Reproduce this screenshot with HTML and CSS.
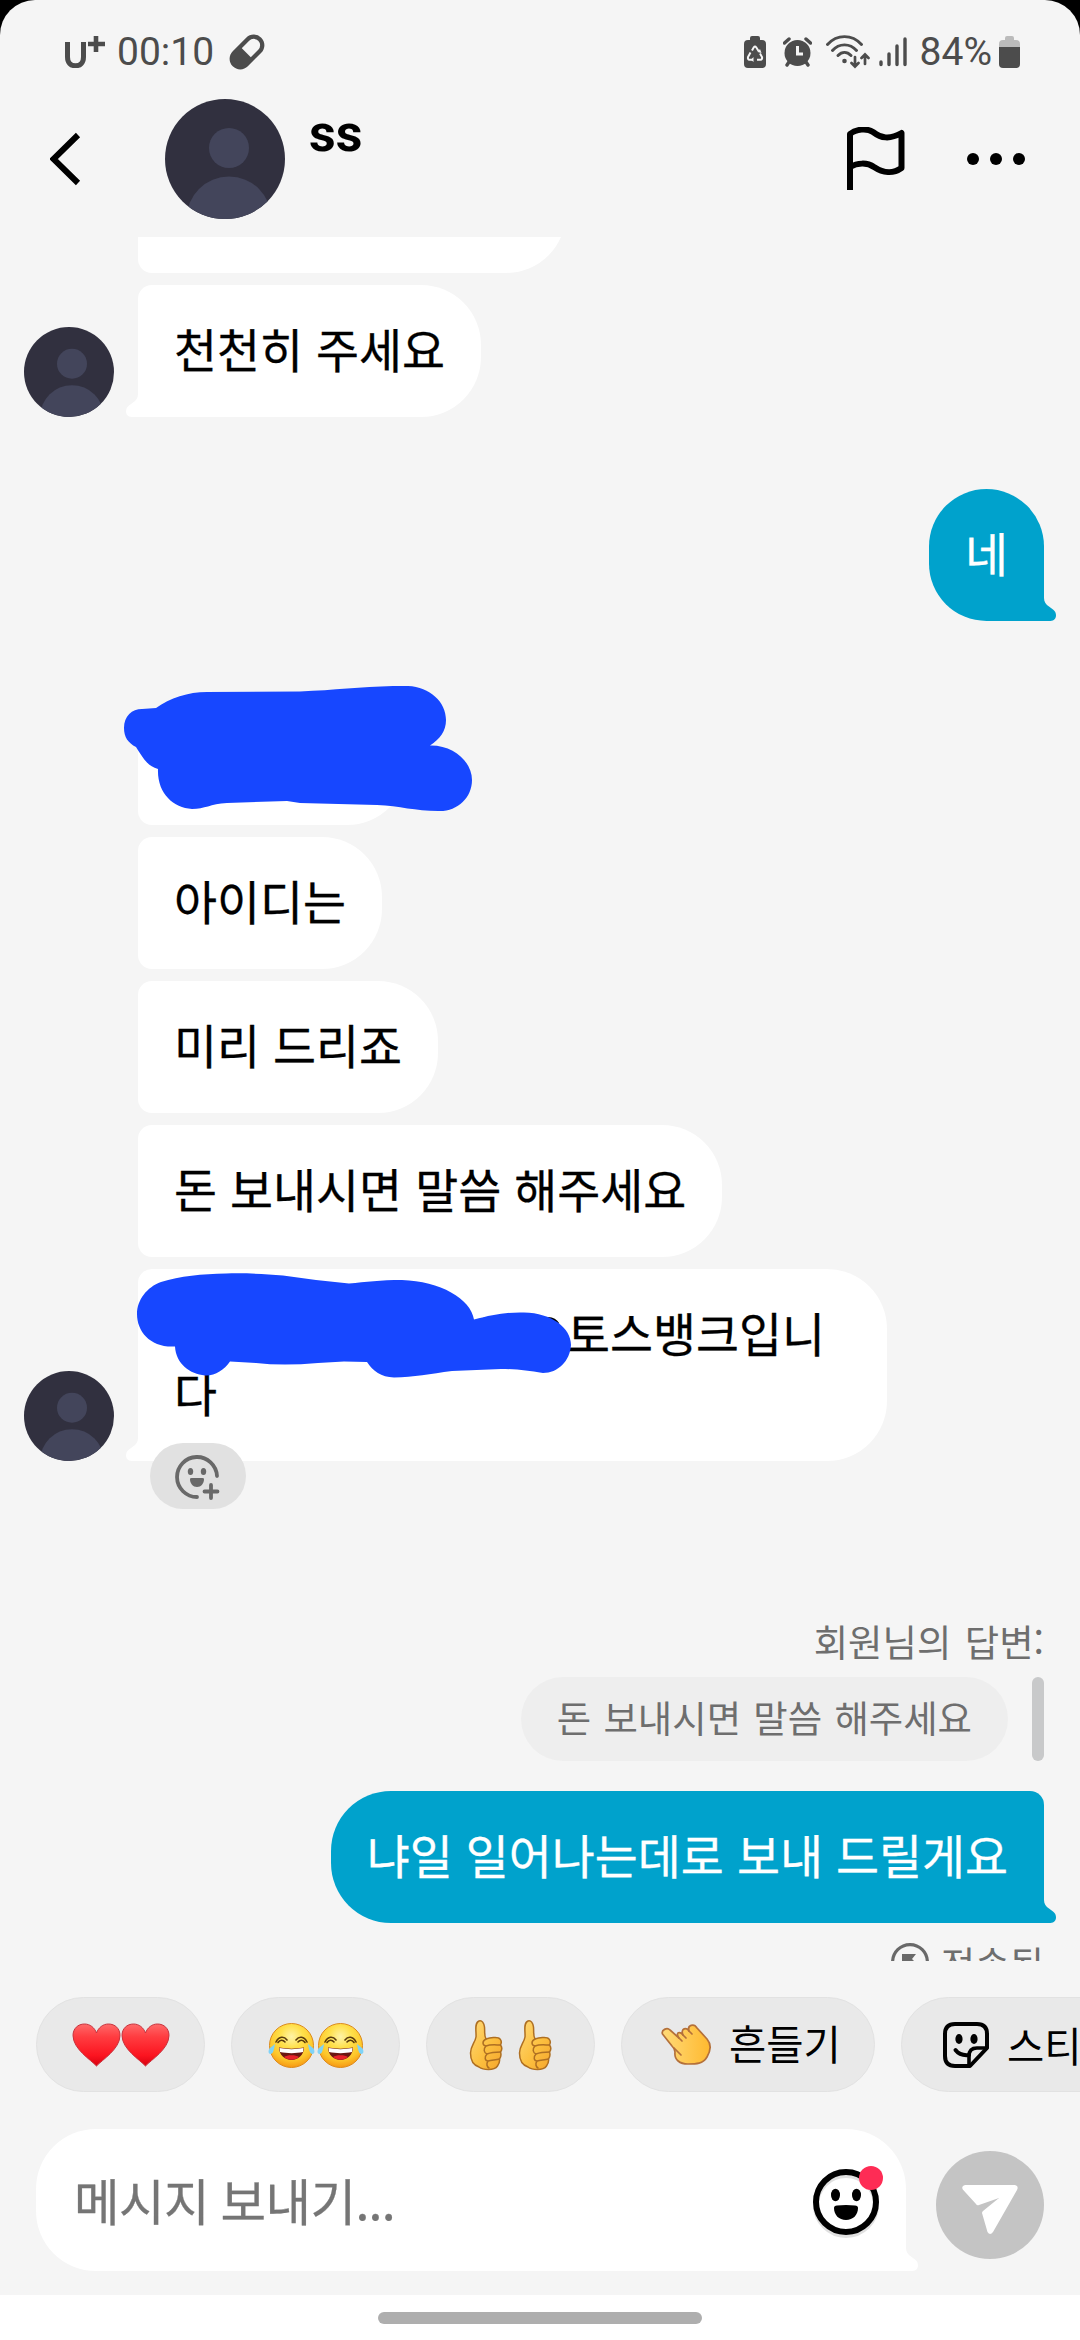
FILE: index.html
```html
<!DOCTYPE html>
<html lang="ko">
<head>
<meta charset="utf-8">
<title>ss</title>
<link rel="stylesheet" href="styles.css">
</head>
<body>
<svg class="defs" width="0" height="0" aria-hidden="true">
  <defs>
    <linearGradient id="heartFill" x1="0" y1="0" x2="0" y2="1"><stop offset="0" stop-color="#ff6a6a"/><stop offset=".3" stop-color="#ff3d41"/><stop offset=".75" stop-color="#fb1420"/><stop offset="1" stop-color="#d8000f"/></linearGradient>
    <radialGradient id="faceFill" cx=".5" cy=".3" r=".75"><stop offset="0" stop-color="#fff3a8"/><stop offset=".35" stop-color="#ffe04a"/><stop offset=".7" stop-color="#fdc62a"/><stop offset="1" stop-color="#f48a0c"/></radialGradient>
    <linearGradient id="skinFill" x1="0" y1="0" x2="1" y2="1"><stop offset="0" stop-color="#ffd97a"/><stop offset=".55" stop-color="#fcc040"/><stop offset="1" stop-color="#f5a52c"/></linearGradient>
    <linearGradient id="handFill" x1="0" y1="0" x2="1" y2="0"><stop offset="0" stop-color="#ffda78"/><stop offset="1" stop-color="#ffb92f"/></linearGradient>
    <clipPath id="round"><circle cx="60" cy="60" r="60"/></clipPath>
    <symbol id="avatar" viewBox="0 0 120 120">
      <g clip-path="url(#round)"><rect width="120" height="120" fill="#31303f"/><circle cx="64" cy="49" r="20" fill="#43455b"/><circle cx="64" cy="120" r="42.5" fill="#43455b"/></g>
    </symbol>
    <symbol id="tail" viewBox="-2 0 14 30">
      <path d="M-2 0H0V7C0 11 2 13.500 5 15.500L9 18.500C11 20 12 22 12 24.300C12 27.500 10 30 6.500 30H-2Z" fill="currentColor"/>
    </symbol>
    <symbol id="heart" viewBox="0 0 49 44">
      <path d="M24.500 43C19 37 1 26 1 12.500C1 5.500 6 1 12.500 1C18 1 22.500 4.500 24.500 10C26.500 4.500 31 1 36.500 1C43 1 48 5.500 48 12.500C48 26 30 37 24.500 43Z" fill="url(#heartFill)" stroke="#c8323c" stroke-width="1"/>
    </symbol>
    <symbol id="joy" viewBox="0 0 49 48">
      <circle cx="24.500" cy="24.500" r="22" fill="url(#faceFill)" stroke="#dc8a1c" stroke-width="1"/>
      <path d="M9 21C12 15 17 15 20 19M29 19C32 15 37 15 40 21M11 21.500C13 18.500 16 18.500 18 21M31 21C33 18.500 36 18.500 38 21.500" fill="none" stroke="#5a3a0c" stroke-width="1.600" stroke-linecap="round"/>
      <path d="M12 26.500C20 28 29 28 37 26.500C37 34 31 39 24.500 39C18 39 12 34 12 26.500Z" fill="#6c1712"/>
      <path d="M12.500 27C20 28.500 29 28.500 36.500 27L36 31C29 32.500 20 32.500 13 31Z" fill="#fff"/>
      <path d="M17 36C20 33.500 29 33.500 32 36C28 39.500 21 39.500 17 36Z" fill="#e8232a"/>
      <path d="M8 23C7 29 6 33 3.500 33C1 33 1 29 3 27ZM41 23C42 29 43 33 45.500 33C48 33 48 29 46 27Z" fill="#7fd3f7"/>
    </symbol>
    <symbol id="thumb" viewBox="0 0 34 52">
      <path d="M10 2C13 1 15 4 15.500 8C16 14 15 17 17 20C20 19 29 17 31 20C33 22 32 25 31.500 26C33 28 33 31 31.500 33C32.500 36 32 38 30.500 40C31 43 30 45 28.500 47C25 52 14 51 10 48C4 46 1.500 42 1.500 34C1.500 27 6 24 7 18C7.500 13 5 4 10 2Z" fill="url(#skinFill)" stroke="#ae6f22" stroke-width="1.500"/>
      <path d="M17 20C13 22 13 26 17 27C14 30 15 34 18 35C15 38 16 42 19 42C17 45 18 48 20 49M17 27C22 25 27 26 31.500 26M18 35C23 33 28 33 31.500 33M19 42C23 41 27 41 30.500 40" fill="none" stroke="#ae6f22" stroke-width="1.500" stroke-linecap="round"/>
    </symbol>
  </defs>
</svg>

<div class="phone">
  <div class="status">
    <div class="status-left">
      <svg width="40" height="32" viewBox="0 0 40 32" fill="none" stroke="#4c4c4c"><path d="M2.500 6V21C2.500 27 6 29.800 10.500 29.800S18.500 27 18.500 21V6" stroke-width="5"/><path d="M31 0V16M23 8H40" stroke-width="4.600"/></svg>
      <span class="clock">00:10</span>
      <svg class="pill-icon" width="36" height="36" viewBox="0 0 36 36"><g transform="rotate(45 18 18)"><rect x="9" y="-1" width="18" height="38" rx="9" fill="none" stroke="#4c4c4c" stroke-width="4.500"/><path d="M8 19H28V28A10 10 0 0 1 8 28Z" fill="#4c4c4c"/></g></svg>
    </div>
    <div class="status-right">
      <svg width="22" height="32" viewBox="0 0 22 32"><path d="M6 2Q6 0 8 0H14Q16 0 16 2V4H18Q22 4 22 8V28Q22 32 18 32H4Q0 32 0 28V8Q0 4 4 4H6Z" fill="#4c4c4c"/><path d="M8 14.500L9.800 11.300Q11 9.800 12.200 11.300L14.500 15M16 17.500L18 21Q18.500 23.500 16.500 23.700H13M9 23.700H5.500Q3.500 23.500 4 21L6.500 16.500" fill="none" stroke="#f5f5f5" stroke-width="2"/><path d="M9.500 21V26L7 23.700ZM13.500 16L17.500 17L16 13Z" fill="#f5f5f5"/></svg>
      <svg class="alarm" width="29" height="30" viewBox="0 0 29 30"><circle cx="14.500" cy="16" r="13" fill="#4c4c4c"/><path d="M1.500 6L6 2M27.500 6L23 2" stroke="#4c4c4c" stroke-width="3.400" stroke-linecap="round"/><path d="M4 28L6 25M25 28L23 25" stroke="#4c4c4c" stroke-width="3.400" stroke-linecap="round"/><path d="M14.500 9V17H20" fill="none" stroke="#f5f5f5" stroke-width="3"/></svg>
      <svg class="wifi" width="44" height="34" viewBox="0 0 44 34" fill="none" stroke="#4c4c4c" stroke-width="2.900" stroke-linecap="round"><path d="M1.500 9.500C11-1 26-1 35.500 9.500M6.500 15.500C13 8 24 8 30.500 15.500M12 20.500C16 16.500 21 16.500 25 20.500"/><circle cx="18.500" cy="26" r="2.300" fill="#4c4c4c" stroke="none"/><path d="M29 22V31M25.500 28L29 31.500L32.500 28M39 29V20M35.500 23L39 19.500L42.500 23" stroke-width="2.700"/></svg>
      <svg class="signal" width="28" height="30" viewBox="0 0 28 30" stroke="#4c4c4c" stroke-width="3.400" stroke-linecap="round"><path d="M2 25V27.500M10 17V27.500M18 9V27.500M26 2V27.500"/></svg>
      <span class="percent">84%</span>
      <svg width="21" height="32" viewBox="0 0 21 32"><path d="M6 2Q6 0 8 0H13Q15 0 15 2V4H17Q21 4 21 8V12H0V8Q0 4 4 4H6Z" fill="#bbb"/><path d="M0 11H21V28Q21 32 17 32H4Q0 32 0 28Z" fill="#4c4c4c"/></svg>
    </div>
  </div>

  <header class="header">
    <svg class="back" width="31" height="54" viewBox="0 0 31 54"><path d="M28 3L3.500 27L28 51" fill="none" stroke="#000" stroke-width="6"/></svg>
    <svg class="header-avatar" width="120" height="120"><use href="#avatar"/></svg>
    <span class="name">ss</span>
    <svg class="flag" width="58" height="64" viewBox="0 0 58 64"><path d="M3 63V7C9 2 20 1 26 5C34 11 42 13 54.500 6V41C46 47 36 46 27 40C20 35 10 36 3 40" fill="none" stroke="#000" stroke-width="6" stroke-linejoin="round"/></svg>
    <svg width="58" height="12" viewBox="0 0 58 12"><circle cx="6" cy="6" r="6"/><circle cx="29" cy="6" r="6"/><circle cx="52" cy="6" r="6"/></svg>
  </header>

  <main class="chat">
    <div class="row in scrolled"><div class="bubble cut"></div></div>
    <div class="row in">
      <svg class="avatar" width="90" height="90"><use href="#avatar"/></svg>
      <div class="bubble tailed">천천히 주세요<svg class="tail" width="14" height="30"><use href="#tail"/></svg></div>
    </div>
    <div class="row out short">
      <div class="bubble tailed">네<svg class="tail" width="14" height="30"><use href="#tail"/></svg></div>
    </div>
    <div class="row in group"><div class="bubble first"></div>
      <svg class="scribble one" width="352" height="130" viewBox="122 684 352 130"><path d="M124 728C124 716 132 709 142 709L156 708C170 698 188 692 207 692L300 691.500C335 690 360 687 393 686H408C430 687 446 702 446 720C446 731 440 739 430 745.500C454 745 472 762 472 780C472 798 457 812 438 811C415 811 400 806 377 805L300 803L287 801L227 803C210 804 205 809 192 809C173 808 157 793 158 769C149 766 146 763 136 747C128 743 124 737 124 728Z"/></svg>
    </div>
    <div class="row in"><div class="bubble">아이디는</div></div>
    <div class="row in"><div class="bubble">미리 드리죠</div></div>
    <div class="row in"><div class="bubble">돈 보내시면 말씀 해주세요</div></div>
    <div class="row in">
      <svg class="avatar" width="90" height="90"><use href="#avatar"/></svg>
      <div class="bubble tailed wide"><span class="hidden-part"></span>토스뱅크입니<br>다<svg class="tail" width="14" height="30"><use href="#tail"/></svg></div>
      <svg class="scribble two" width="436" height="106" viewBox="136 1272 436 106"><path class="trace" d="M481 1320Q485 1318.500 490 1318.500M548 1318.500Q555 1319 558 1324"/><path d="M137 1314C137 1300 147 1287 161 1282C180 1276 202 1274 226 1273.500C248 1273 265 1274 283 1275.500L316 1280L349 1283.500C366 1282 380 1280 402 1280C440 1281 471 1299 474 1319.500C492 1315 505 1312 524 1312.500C552 1313 571 1328 571 1345C570 1361 558 1373 543 1373C528 1371 518 1369 501 1369L452 1371C430 1374 414 1377 394 1377.500C381 1377 373 1371 367 1362L344 1361.500L318 1363Q283 1366 256 1363L230 1361.500C224 1370 215 1376 205 1375.500C190 1374 176 1364 175 1346.500C151 1348 137 1332 137 1314Z"/></svg>
    </div>
    <div class="react">
      <svg width="46" height="46" viewBox="0 0 46 46" fill="none" stroke="#696969" stroke-width="3.800" stroke-linecap="round"><path d="M42 22A20 20 0 1 0 22 43"/><path d="M36 31V44M29.500 37.500H42.500"/><g fill="#696969" stroke="none"><ellipse cx="15.500" cy="17.500" rx="2.700" ry="3.500"/><ellipse cx="28.500" cy="17.500" rx="2.700" ry="3.500"/><path d="M15 25Q15 24 16.500 24H27.500Q29 24 29 25C29 29.500 26 33 22 33S15 29.500 15 25Z"/></g></svg>
    </div>
    <div class="reply-label">회원님의 답변:</div>
    <div class="quote"><div class="quote-text">돈 보내시면 말씀 해주세요</div><div class="quote-bar"></div></div>
    <div class="row out reply">
      <div class="bubble tailed">냐일 일어나는데로 보내 드릴게요<svg class="tail" width="14" height="30"><use href="#tail"/></svg></div>
    </div>
    <div class="sent">
      <svg width="38" height="38" viewBox="0 0 38 38"><circle cx="19" cy="19" r="17.400" fill="none" stroke="#696969" stroke-width="3.200"/><path d="M11 11H25L21 16L27 22L22 27L16 21L11 26Z" fill="#696969"/></svg>
      <span>전송됨</span>
    </div>
  </main>

  <div class="chips">
    <div class="chip"><svg width="49" height="44"><use href="#heart"/></svg><svg width="49" height="44"><use href="#heart"/></svg></div>
    <div class="chip"><svg width="49" height="48"><use href="#joy"/></svg><svg width="49" height="48"><use href="#joy"/></svg></div>
    <div class="chip thumbs"><svg width="34" height="52"><use href="#thumb"/></svg><svg width="34" height="52"><use href="#thumb"/></svg></div>
    <div class="chip label">
      <svg width="50" height="42" viewBox="0 0 50 42"><path d="M1.500 10C0 6 6 3 9 6L18 14C14 8 19 7 22 11C19 4 26 3 28 7C26 1 33-1 36 4L46 15C51 21 49 28 46 33C42 40 35 40 27 40C19 40 13 36 14 28C14 26 13 24 11 22Z" fill="url(#handFill)" stroke="#b4703a" stroke-width="1.700" stroke-linejoin="round"/><path d="M13 24L20 31M18 14L21 17M22 11L25 14M28 7L31 10" stroke="#b4703a" stroke-width="1.700" stroke-linecap="round"/></svg>
      <span>흔들기</span>
    </div>
    <div class="chip label sticker">
      <svg width="46" height="46" viewBox="0 0 46 46" fill="none" stroke="#000" stroke-width="4" stroke-linejoin="round"><path d="M12 2H34Q44 2 44 12V26L27 44H12Q2 44 2 34V12Q2 2 12 2Z"/><path d="M26 43V34Q26 26 34 26H43" stroke-width="3.600"/><path d="M12.500 28Q17 34 26 33" stroke-linecap="round"/><g fill="#000" stroke="none"><ellipse cx="16" cy="17" rx="3.600" ry="5"/><ellipse cx="31" cy="17" rx="3.600" ry="5"/></g></svg>
      <span>스티커</span>
    </div>
  </div>

  <div class="composer">
    <div class="field">
      <span class="placeholder">메시지 보내기...</span>
      <div class="emoji">
        <svg width="66" height="70" viewBox="0 0 66 70"><circle cx="33" cy="36" r="30" fill="none" stroke="#e0e0e0" stroke-width="6"/><circle cx="33" cy="33" r="30" fill="none" stroke="#000" stroke-width="6"/><ellipse cx="22.500" cy="26" rx="4.500" ry="6.200"/><ellipse cx="43.500" cy="26" rx="4.500" ry="6.200"/><path d="M21 39Q21 36.500 24 36.500Q33 35.500 42 36.500Q45 36.500 45 39C45 46 40 51 33 51S21 46 21 39Z"/></svg>
        <span class="dot"></span>
      </div>
      <svg class="tail" width="14" height="30"><use href="#tail"/></svg>
    </div>
    <div class="send"><svg width="56" height="50" viewBox="0 0 56 50"><path d="M3 0H53Q57 1 55 5L31 47Q28 51 25.500 47L20 28Q20 27 21 26L37 13L17 20Q15 21 14 19L.8 4.500Q-1 1 3 0Z" fill="#fff"/></svg></div>
  </div>

  <div class="nav"><div class="home"></div></div>
</div>
</body>
</html>
```

FILE: styles.css
```css
* { box-sizing: border-box; }
body { margin: 0; background: #000; font-family: "Noto Sans CJK KR", "Noto Sans", sans-serif; }
.defs { position: absolute; }
svg { display: block; flex: none; }
.phone {
  width: 1080px;
  height: 2340px;
  display: flex;
  flex-direction: column;
  background: #f5f5f5;
  border-radius: 35px 35px 0 0;
  overflow: hidden;
}

.status {
  height: 84px;
  flex: none;
  padding: 20px 60px 0 65px;
  display: flex;
  justify-content: space-between;
  align-items: center;
  color: #4c4c4c;
  font: 400 39px/44px Roboto, sans-serif;
}
.status-left, .status-right { display: flex; align-items: center; }
.clock { margin-left: 12px; }
.pill-icon { margin-left: 15px; overflow: visible; transform: scale(.95); }
.alarm { margin-left: 17px; }
.wifi { margin-left: 14px; }
.signal { margin-left: 9px; }
.percent { margin: 0 7px 0 13px; }

.header {
  height: 153px;
  flex: none;
  padding: 0 55px 3px 50px;
  display: flex;
  align-items: center;
}
.header-avatar { margin-left: 84px; }
.name { margin: -50px auto 0 24px; font: 700 52px/60px Roboto, sans-serif; color: #000; }
.flag { margin-right: 62px; }

.chat {
  height: 1724px;
  flex: none;
  overflow: hidden;
  display: flex;
  flex-direction: column;
  color: #000;
  font-size: 46.740px;
  line-height: 60px;
}
.row { position: relative; display: flex; align-items: flex-end; flex: none; margin-bottom: 12px; }
.in { padding-left: 138px; }
.in .avatar { margin: 0 24px 0 -114px; }
.out { justify-content: flex-end; padding-right: 36px; }
.bubble {
  position: relative;
  min-height: 132px;
  padding: 33px 36px 39px;
  background: #fff;
  border-radius: 14px 60px 60px 14px;
  white-space: nowrap;
  -webkit-text-stroke: .3px currentColor;
}
.scrolled { margin-top: -96px; }
.cut { width: 428px; }
.in .tailed { border-bottom-left-radius: 0; }
.tail { position: absolute; bottom: 0; right: -12px; color: #fff; }
.in .tail { right: auto; left: -12px; transform: scaleX(-1); }
.out .bubble { background: #00a2cc; color: #fff; border-radius: 60px 60px 0 60px; }
.out .tail { color: #00a2cc; }
.short { margin: 60px 0 72px; }
.first { width: 269px; border-radius: 60px 60px 60px 14px; }
.wide { width: 749px; }
.hidden-part { display: inline-block; width: 393px; }
.scribble { position: absolute; fill: #1747ff; }
.scribble .trace { fill: none; stroke: #000; stroke-width: 3; }
.one { left: 122px; top: -9px; }
.two { left: 136px; top: 3px; }

.react {
  position: relative;
  flex: none;
  width: 96px;
  height: 66px;
  margin: -30px 0 0 150px;
  padding: 11px 0 0 25px;
  border-radius: 33px;
  background: #e1e1e1;
}
.reply-label, .quote, .sent { flex: none; color: #6e6e6e; font-size: 37.400px; line-height: 44px; word-spacing: 1.800px; }
.reply-label { height: 44px; margin: 110px 36px 14px 0; text-align: right; word-spacing: 3px; }
.quote { display: flex; justify-content: flex-end; padding-right: 36px; gap: 24px; }
.quote-text { height: 84px; padding: 18px 36px; border-radius: 42px; background: #eee; }
.quote-bar { width: 12px; border-radius: 6px; background: #c8c9ca; }
.reply { margin: 30px 0 18px; }
.reply .bubble { border-radius: 60px 14px 0 60px; }
.sent { display: flex; justify-content: flex-end; gap: 12px; padding-right: 36px; }
.sent svg { margin-top: 2px; }

.chips { height: 168px; flex: none; display: flex; gap: 26px; padding: 36px 0 0 36px; overflow: hidden; }
.chip {
  flex: none;
  width: 169px;
  height: 95px;
  display: flex;
  align-items: center;
  justify-content: center;
  border: 1px solid #e2e2e2;
  border-radius: 48px;
  background: #e9e9e9;
  color: #000;
  font-size: 40.500px;
  line-height: 60px;
}
.thumbs { gap: 15px; }
.label { width: 254px; justify-content: flex-start; padding-left: 39px; gap: 18px; }
.label span { margin-top: -3px; }
.sticker { width: 256px; padding-left: 41px; }
.sticker span { margin-top: 0; }

.composer { height: 166px; flex: none; display: flex; gap: 30px; padding-left: 36px; }
.field {
  position: relative;
  width: 870px;
  height: 142px;
  padding: 0 27px 0 38px;
  display: flex;
  align-items: center;
  justify-content: space-between;
  background: #fff;
  border-radius: 60px 60px 0 60px;
}
.placeholder { color: #757575; font-size: 49.500px; line-height: 70px; letter-spacing: -.600px; word-spacing: -1.500px; -webkit-text-stroke: .3px currentColor; }
.emoji { position: relative; margin-top: 8px; }
.dot { position: absolute; right: -4px; top: -3px; width: 24px; height: 24px; border-radius: 50%; background: #fe2c55; }
.send { width: 108px; height: 108px; margin-top: 22px; padding: 34px 0 0 26px; border-radius: 50%; background: #c4c4c4; }

.nav { height: 45px; flex: none; background: #fff; padding-top: 17px; }
.home { width: 324px; height: 12px; margin: 0 auto; border-radius: 6px; background: #aeaeae; }
```
